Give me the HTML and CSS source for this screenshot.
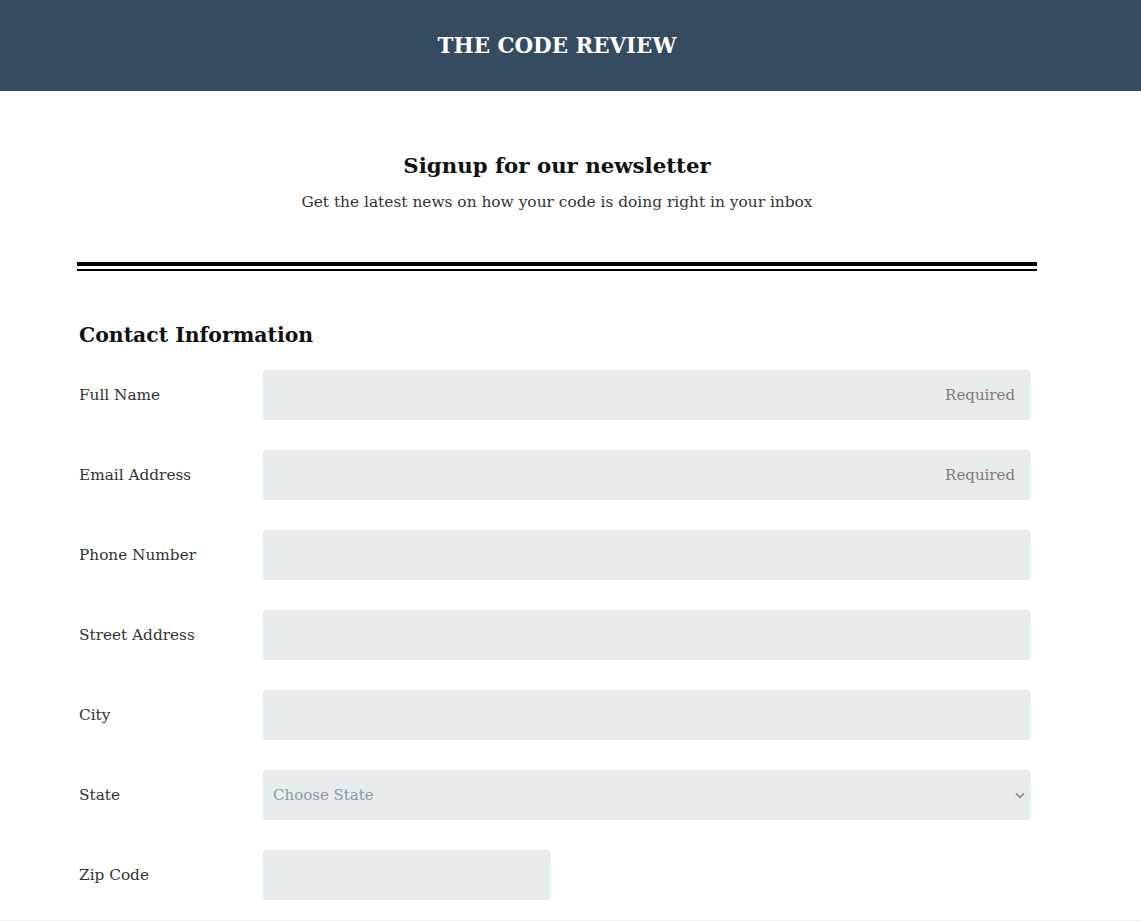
FILE: index.html
```html
<!DOCTYPE html>
<html lang="en">
<head>
<meta charset="utf-8">
<title>The Code Review</title>
<link rel="stylesheet" href="styles.css">
</head>
<body>
<header class="site-header">
  <div class="frame">
    <h1 class="brand">THE CODE REVIEW</h1>
  </div>
</header>
<main class="frame">
  <div class="container">
    <section class="intro">
      <h2 class="intro-title">Signup for our newsletter</h2>
      <p class="intro-sub">Get the latest news on how your code is doing right in your inbox</p>
    </section>
    <div class="divider"></div>
    <form class="form">
      <h3 class="section-title">Contact Information</h3>
      <div class="row">
        <label class="label" for="name">Full Name</label>
        <input class="field field-req" id="name" type="text" placeholder="Required">
      </div>
      <div class="row">
        <label class="label" for="email">Email Address</label>
        <input class="field field-req" id="email" type="email" placeholder="Required">
      </div>
      <div class="row">
        <label class="label" for="phone">Phone Number</label>
        <input class="field" id="phone" type="tel">
      </div>
      <div class="row">
        <label class="label" for="street">Street Address</label>
        <input class="field" id="street" type="text">
      </div>
      <div class="row">
        <label class="label" for="city">City</label>
        <input class="field" id="city" type="text">
      </div>
      <div class="row">
        <label class="label" for="state">State</label>
        <div class="select-wrap">
          <select class="field select" id="state">
            <option>Choose State</option>
          </select>
          <svg class="chevron" width="10" height="7" viewBox="0 0 10 7"><path d="M1 1.5 L5 5.5 L9 1.5" fill="none" stroke="#8a939b" stroke-width="1.8"/></svg>
        </div>
      </div>
      <div class="row">
        <label class="label" for="zip">Zip Code</label>
        <input class="field field-zip" id="zip" type="text">
      </div>
    </form>
  </div>
</main>
<div class="below"></div>
</body>
</html>
```
FILE: styles.css
```css
* { box-sizing: border-box; }
html, body { margin: 0; padding: 0; }
body {
  font-family: "DejaVu Serif", "Liberation Serif", serif;
  color: #333;
  background: #fff;
}
.frame { width: 1114px; }
.site-header {
  background: #354b60;
  height: 91px;
  display: flex;
  align-items: center;
}
.brand {
  margin: 0;
  text-align: center;
  color: #fff;
  font-size: 21.4px;
  font-weight: 700;
}
.container {
  width: 960px;
  margin-left: 77px;
}
.intro {
  text-align: center;
  padding-top: 59px;
}
.intro-title {
  margin: 0;
  font-size: 21.3px;
  line-height: 31px;
  font-weight: 700;
  color: #111;
}
.intro-sub {
  margin: 9px 0 0;
  font-size: 15.4px;
  line-height: 24px;
  color: #333;
}
.divider {
  margin-top: 48px;
  height: 9px;
  border-top: 4px solid #000;
  border-bottom: 2px solid #000;
}
.form { padding: 0 6px 0 2px; }
.section-title {
  margin: 49px 0 19px;
  font-size: 20.4px;
  line-height: 31px;
  font-weight: 700;
  color: #111;
}
.row {
  display: grid;
  grid-template-columns: 184px 768px;
  align-items: center;
  margin-bottom: 30px;
}
.row:last-child { margin-bottom: 20px; }
.label {
  font-size: 15.3px;
  color: #333;
}
.field {
  display: block;
  width: 100%;
  height: 50px;
  border: none;
  border-radius: 4px;
  background: #e7ecef;
  font-family: inherit;
  font-size: 15px;
  color: #333;
  padding: 0 16px 0 10px;
  outline: none;
}
.field::placeholder { color: #7d7d7d; }
.field-req { text-align: right; }
.field-zip { width: 288px; }
.select-wrap { position: relative; }
.select {
  appearance: none;
  -webkit-appearance: none;
  color: #8a9aa6;
}
.chevron {
  position: absolute;
  right: 6px;
  top: 22px;
  pointer-events: none;
}
.below {
  height: 40px;
  background: #f0f0f0;
}
```
